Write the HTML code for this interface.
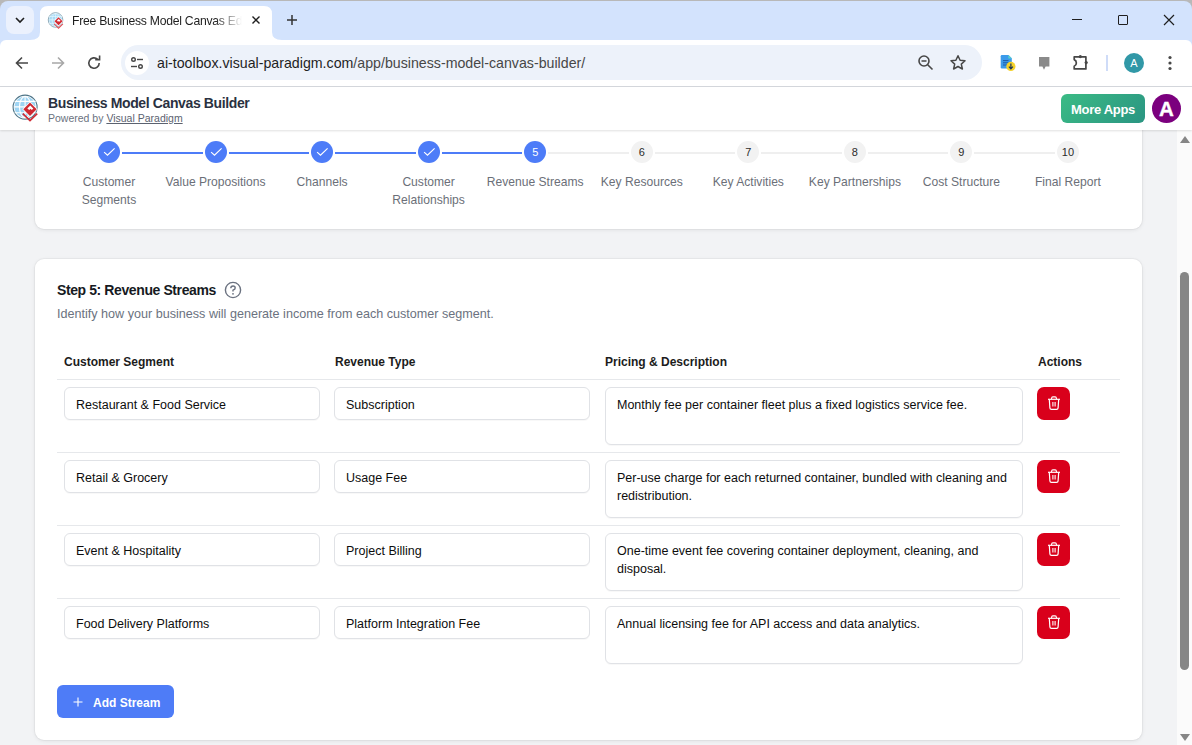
<!DOCTYPE html>
<html><head><meta charset="utf-8">
<style>
*{box-sizing:border-box;margin:0;padding:0}
html,body{width:1192px;height:745px;overflow:hidden;background:#f2f3f5;font-family:"Liberation Sans",sans-serif}
.a{position:absolute}
#frame{position:absolute;left:0;top:0;width:1192px;height:12px;background:#b8b8b8}
#tabbar{position:absolute;left:0;top:1px;width:1192px;height:46px;background:#d3e3fd;border-radius:8px 8px 0 0}
#toolbar{position:absolute;left:0;top:40px;width:1192px;height:47px;background:#fff;border-bottom:1px solid #d5d8dd;border-radius:6px 6px 0 0;z-index:2}
#apphdr{position:absolute;left:0;top:87px;width:1192px;height:43px;background:#fff;box-shadow:0 1px 2px rgba(0,0,0,.12);z-index:5}
#content{position:absolute;left:0;top:130px;width:1177px;height:615px;overflow:hidden}
#scroll{position:absolute;left:1177px;top:130px;width:15px;height:615px;background:#fbfbfb}
.card{position:absolute;background:#fff;border-radius:9px;box-shadow:0 0 0 1px rgba(0,0,0,.03),0 1px 4px rgba(0,0,0,.08)}
.step{position:absolute;width:22px;height:22px;border-radius:50%;top:11px;text-align:center;line-height:22px;font-size:11px}
.done{background:#4d7cf8}
.cur{background:#4d7cf8;color:#fff}
.todo{background:#f2f2f2;color:#2b2b2b}
.sline{position:absolute;height:2px;top:22px}
.lbl{position:absolute;top:43px;width:110px;margin-left:-55px;text-align:center;font-size:12.1px;line-height:18px;color:#6b6f78}
.th{position:absolute;top:95.8px;font-size:12px;font-weight:700;color:#1c1c1c}
.hr{position:absolute;left:22px;width:1063px;height:1px;background:#e6e8eb}
.inp{position:absolute;height:33px;border:1px solid #e0e2e6;box-shadow:0 1px 1px rgba(0,0,0,.03);border-radius:6px;background:#fff;font-size:12.5px;color:#0d0d0d;padding-left:11px;line-height:34px}
.ta{position:absolute;left:570px;width:418px;height:58px;border:1px solid #e0e2e6;box-shadow:0 1px 1px rgba(0,0,0,.03);border-radius:6px;background:#fff;font-size:12.5px;color:#0d0d0d;padding:8px 11px;line-height:18px}
.del{position:absolute;left:1002px;width:33px;height:33px;border-radius:7px;background:#d9001b}
.del svg{position:absolute;left:9.5px;top:8.7px}
</style></head>
<body>
<!-- ============ TAB BAR ============ -->
<div id="frame"></div>
<div id="tabbar">
  <!-- dropdown btn -->
  <div class="a" style="left:6px;top:5px;width:28px;height:28px;border-radius:8px;background:#ebf1fd"></div>
  <svg class="a" style="left:14px;top:14px" width="12" height="10" viewBox="0 0 12 10"><path d="M2 3 L6 7 L10 3" fill="none" stroke="#1f1f1f" stroke-width="1.6"/></svg>
  <!-- active tab -->
  <svg class="a" style="left:30px;top:5px" width="252" height="34" viewBox="0 0 252 34">
    <path d="M0 34 Q10 34 10 26 L10 8 Q10 0 18 0 L234 0 Q242 0 242 8 L242 26 Q242 34 252 34 Z" fill="#fff"/>
  </svg>
  <!-- favicon -->
  <svg class="a" style="left:47px;top:11px" width="17" height="17" viewBox="0 0 28 28">
    <circle cx="14.1" cy="13.1" r="12" fill="#fff" stroke="#6d93a6" stroke-width="1.3"/>
    <circle cx="14.1" cy="13.1" r="10.6" fill="#a9dbf6"/>
    <path d="M3.5 7.4 H24.7 M3.2 12.9 H25 M3.5 18.7 H24.7 M14.1 2.5 V23.7" stroke="#e9f7fd" stroke-width="1.1"/>
    <ellipse cx="14.1" cy="13.1" rx="5.6" ry="10.6" fill="none" stroke="#e9f7fd" stroke-width="1.1"/>
    <path d="M19 7.6 L26.7 15.3 L19 23 L11.3 15.3 Z" fill="#fff"/>
    <path d="M19 8.6 L25.7 15.3 L19 22 L12.3 15.3 Z" fill="#d42a33"/>
    <path d="M19.3 11.4 L22.3 14.4 L20.8 15.9 L19.6 14.7 L18.3 16 L16.3 14.4 Z" fill="#fff"/>
    <path d="M11.8 19.6 L19 26.6 L26.2 19.6" fill="none" stroke="#e0535a" stroke-width="1.8"/>
  </svg>
  <div class="a" style="left:72px;top:12.5px;font-size:12.2px;color:#1f1f1f;white-space:nowrap;width:170px;overflow:hidden;letter-spacing:-0.25px;-webkit-mask-image:linear-gradient(90deg,#000 84%,transparent 100%)">Free Business Model Canvas Editor</div>
  <svg class="a" style="left:251px;top:14px" width="10" height="10" viewBox="0 0 10 10"><path d="M1.5 1.5 L8.5 8.5 M8.5 1.5 L1.5 8.5" stroke="#1f1f1f" stroke-width="1.4"/></svg>
  <svg class="a" style="left:286px;top:13px" width="12" height="12" viewBox="0 0 12 12"><path d="M6 1 V11 M1 6 H11" stroke="#333" stroke-width="1.5"/></svg>
  <!-- window controls -->
  <div class="a" style="left:1072px;top:18px;width:10px;height:1px;background:#1f1f1f"></div>
  <div class="a" style="left:1118px;top:14px;width:10px;height:10px;border:1.2px solid #1f1f1f;border-radius:1px"></div>
  <svg class="a" style="left:1163px;top:13px" width="12" height="12" viewBox="0 0 12 12"><path d="M1 1 L11 11 M11 1 L1 11" stroke="#1f1f1f" stroke-width="1.2"/></svg>
</div>

<!-- ============ TOOLBAR ============ -->
<div id="toolbar">
  <svg class="a" style="left:14px;top:15px" width="16" height="16" viewBox="0 0 16 16"><path d="M14 8 H2.5 M8 2.5 L2.5 8 L8 13.5" fill="none" stroke="#474747" stroke-width="1.6"/></svg>
  <svg class="a" style="left:50px;top:15px" width="16" height="16" viewBox="0 0 16 16"><path d="M2 8 H13.5 M8 2.5 L13.5 8 L8 13.5" fill="none" stroke="#a8a8a8" stroke-width="1.6"/></svg>
  <svg class="a" style="left:86px;top:15px" width="16" height="16" viewBox="0 0 16 16"><path d="M13.2 8 A5.2 5.2 0 1 1 11.6 4.3" fill="none" stroke="#474747" stroke-width="1.6"/><path d="M9.2 4.6 L13.6 4.6 L13.6 0.6" fill="none" stroke="#474747" stroke-width="1.6"/></svg>
  <!-- omnibox -->
  <div class="a" style="left:121px;top:5px;width:861px;height:35px;border-radius:18px;background:#edf2fa"></div>
  <div class="a" style="left:125px;top:10.5px;width:24px;height:24px;border-radius:50%;background:#fff"></div>
  <svg class="a" style="left:129px;top:15px" width="16" height="16" viewBox="0 0 16 16">
    <circle cx="4.5" cy="4.5" r="1.8" fill="none" stroke="#474747" stroke-width="1.4"/><path d="M8 4.5 H14" stroke="#474747" stroke-width="1.4"/>
    <circle cx="11.5" cy="11.5" r="1.8" fill="none" stroke="#474747" stroke-width="1.4"/><path d="M2 11.5 H8" stroke="#474747" stroke-width="1.4"/>
  </svg>
  <div class="a" style="left:157px;top:15px;font-size:14.2px;color:#1f1f1f;white-space:nowrap;line-height:16px">ai-toolbox.visual-paradigm.com<span style="color:#474747">/app/business-model-canvas-builder/</span></div>
  <svg class="a" style="left:917px;top:14px" width="18" height="18" viewBox="0 0 18 18"><circle cx="7" cy="7" r="5" fill="none" stroke="#474747" stroke-width="1.6"/><path d="M4.5 7 H9.5 M10.7 10.7 L15.5 15.5" stroke="#474747" stroke-width="1.6"/></svg>
  <svg class="a" style="left:949px;top:14px" width="18" height="18" viewBox="0 0 18 18"><path d="M9 1.8 L11.1 6.3 L16 6.8 L12.3 10.1 L13.4 15 L9 12.5 L4.6 15 L5.7 10.1 L2 6.8 L6.9 6.3 Z" fill="none" stroke="#474747" stroke-width="1.5" stroke-linejoin="round"/></svg>
  <!-- extensions -->
  <svg class="a" style="left:999px;top:14px" width="20" height="20" viewBox="0 0 20 20">
    <path d="M2.9 1 H9.6 L12.8 4.2 V13.3 Q12.8 14.5 11.6 14.5 H2.9 Q1.7 14.5 1.7 13.3 V2.2 Q1.7 1 2.9 1 Z" fill="#3b9aea"/><path d="M9.4 1 L12.8 4.4 H9.4 Z" fill="#57d6c9"/>
    <path d="M4 6.6 H9.5 M4 8.8 H9.5 M4 11 H8" stroke="#1c5aa6" stroke-width="1"/>
    <circle cx="11.9" cy="12.4" r="4.6" fill="#f5d22b"/><path d="M11.9 9.6 V14.6 M9.9 12.6 L11.9 14.8 L13.9 12.6" fill="none" stroke="#1d3557" stroke-width="1.2"/>
  </svg>
  <svg class="a" style="left:1036px;top:14px" width="18" height="18" viewBox="0 0 18 18"><path d="M3 3.1 H13.4 V12.4 H9.6 L8 15.7 L6.4 12.4 H3 Z" fill="#8a8a8a"/></svg>
  <svg class="a" style="left:1071px;top:14px" width="19" height="18" viewBox="0 0 19 18"><path d="M3.2 2.8 H14.9 V14.9 H3.2 V12.2 A3.6 3.6 0 0 0 3.2 5.6 Z" fill="none" stroke="#474747" stroke-width="1.7" stroke-linejoin="round"/><circle cx="9.3" cy="2.6" r="1.6" fill="#474747"/><circle cx="15.2" cy="8.6" r="1.6" fill="#474747"/></svg>
  <div class="a" style="left:1106px;top:15px;width:2px;height:16px;background:#cfdcf8"></div>
  <div class="a" style="left:1124px;top:13px;width:20px;height:20px;border-radius:50%;background:#3198a7;color:#fff;font-size:11px;text-align:center;line-height:20px">A</div>
  <svg class="a" style="left:1166px;top:14px" width="8" height="18" viewBox="0 0 8 18"><circle cx="4" cy="3.5" r="1.6" fill="#474747"/><circle cx="4" cy="9" r="1.6" fill="#474747"/><circle cx="4" cy="14.5" r="1.6" fill="#474747"/></svg>
</div>

<!-- ============ APP HEADER ============ -->
<div id="apphdr">
  <svg class="a" style="left:11px;top:7px" width="28" height="28" viewBox="0 0 28 28">
    <circle cx="14.1" cy="13.1" r="12" fill="#fff" stroke="#4d7487" stroke-width="1.1"/>
    <circle cx="14.1" cy="13.1" r="10.6" fill="#9ed4f3"/>
    <path d="M3.5 7.4 H24.7 M3.2 12.9 H25 M3.5 18.7 H24.7 M14.1 2.5 V23.7" stroke="#fff" stroke-width="1.1"/>
    <ellipse cx="14.1" cy="13.1" rx="5.6" ry="10.6" fill="none" stroke="#fff" stroke-width="1.1"/>
    <path d="M19 7.6 L26.7 15.3 L19 23 L11.3 15.3 Z" fill="#fff"/>
    <path d="M19 8.6 L25.7 15.3 L19 22 L12.3 15.3 Z" fill="#cf2a33"/>
    <path d="M19.3 11.4 L22.3 14.4 L20.8 15.9 L19.6 14.7 L18.3 16 L16.3 14.4 Z" fill="#fff"/>
    <path d="M11.8 19.6 L19 26.6 L26.2 19.6" fill="none" stroke="#cf2a33" stroke-width="1.7"/>
  </svg>
  <div class="a" style="left:48px;top:8px;font-size:14px;font-weight:700;color:#2a3141;white-space:nowrap;letter-spacing:-0.38px;line-height:16px">Business Model Canvas Builder</div>
  <div class="a" style="left:48px;top:24px;font-size:10.5px;color:#6b7280;white-space:nowrap;line-height:14px">Powered by <span style="color:#5b6270;text-decoration:underline">Visual Paradigm</span></div>
  <div class="a" style="left:1061px;top:7px;width:84px;height:29px;border-radius:6px;background:linear-gradient(135deg,#3bbb85,#2a9582);color:#fff;font-size:13px;font-weight:700;text-align:center;line-height:31.6px;letter-spacing:-0.3px">More Apps</div>
  <div class="a" style="left:1152px;top:7px;width:29px;height:29px;border-radius:50%;background:#7b007e;color:#fff;font-size:20.5px;font-weight:700;-webkit-text-stroke:0.4px #fff;text-align:center;line-height:29px">A</div>
</div>

<!-- ============ CONTENT ============ -->
<div id="content">
  <!-- stepper card -->
  <div class="card" style="left:35px;top:-60px;width:1107px;height:159px">
    <div id="stepper" class="a" style="left:-35px;top:60px;width:1177px;height:100px">
<div class="sline" style="left:122.0px;width:80.6px;background:#4d7cf8"></div>
<div class="sline" style="left:228.6px;width:80.6px;background:#4d7cf8"></div>
<div class="sline" style="left:335.1px;width:80.5px;background:#4d7cf8"></div>
<div class="sline" style="left:441.6px;width:80.6px;background:#4d7cf8"></div>
<div class="sline" style="left:548.2px;width:80.5px;background:#efefef"></div>
<div class="sline" style="left:654.8px;width:80.5px;background:#efefef"></div>
<div class="sline" style="left:761.3px;width:80.6px;background:#efefef"></div>
<div class="sline" style="left:867.9px;width:80.5px;background:#efefef"></div>
<div class="sline" style="left:974.4px;width:80.5px;background:#efefef"></div>
<div class="step done" style="left:98.0px"><svg width="22" height="22" viewBox="0 0 22 22" style="display:block"><path d="M6.1 11.1 L9.5 14.2 L16.6 7.3" fill="none" stroke="#fff" stroke-width="1.15"/></svg></div>
<div class="lbl" style="left:109.0px">Customer<br>Segments</div>
<div class="step done" style="left:204.6px"><svg width="22" height="22" viewBox="0 0 22 22" style="display:block"><path d="M6.1 11.1 L9.5 14.2 L16.6 7.3" fill="none" stroke="#fff" stroke-width="1.15"/></svg></div>
<div class="lbl" style="left:215.6px">Value Propositions</div>
<div class="step done" style="left:311.1px"><svg width="22" height="22" viewBox="0 0 22 22" style="display:block"><path d="M6.1 11.1 L9.5 14.2 L16.6 7.3" fill="none" stroke="#fff" stroke-width="1.15"/></svg></div>
<div class="lbl" style="left:322.1px">Channels</div>
<div class="step done" style="left:417.6px"><svg width="22" height="22" viewBox="0 0 22 22" style="display:block"><path d="M6.1 11.1 L9.5 14.2 L16.6 7.3" fill="none" stroke="#fff" stroke-width="1.15"/></svg></div>
<div class="lbl" style="left:428.6px">Customer<br>Relationships</div>
<div class="step cur" style="left:524.2px">5</div>
<div class="lbl" style="left:535.2px">Revenue Streams</div>
<div class="step todo" style="left:630.8px">6</div>
<div class="lbl" style="left:641.8px">Key Resources</div>
<div class="step todo" style="left:737.3px">7</div>
<div class="lbl" style="left:748.3px">Key Activities</div>
<div class="step todo" style="left:843.9px">8</div>
<div class="lbl" style="left:854.9px">Key Partnerships</div>
<div class="step todo" style="left:950.4px">9</div>
<div class="lbl" style="left:961.4px">Cost Structure</div>
<div class="step todo" style="left:1056.9px">10</div>
<div class="lbl" style="left:1067.9px">Final Report</div>
</div><!--/stepper-->
  </div>

  <!-- main card -->
  <div class="card" style="left:35px;top:129px;width:1107px;height:481px">
    <div class="a" style="left:22px;top:23.3px;font-size:14px;font-weight:700;color:#161a22;white-space:nowrap;letter-spacing:-0.4px;line-height:16px">Step 5: Revenue Streams</div>
    <svg class="a" style="left:189px;top:22px" width="18" height="18" viewBox="0 0 18 18"><circle cx="9" cy="9" r="7.6" fill="none" stroke="#6b7280" stroke-width="1.4"/><path d="M6.8 7.2 Q6.8 5 9 5 Q11.2 5 11.2 7 Q11.2 8.4 9 9.2 V10.4" fill="none" stroke="#6b7280" stroke-width="1.4"/><circle cx="9" cy="12.8" r=".9" fill="#6b7280"/></svg>
    <div class="a" style="left:22px;top:47px;font-size:12.6px;color:#6b7280;white-space:nowrap;line-height:16px">Identify how your business will generate income from each customer segment.</div>

    <div class="th" style="left:29px">Customer Segment</div>
    <div class="th" style="left:300px">Revenue Type</div>
    <div class="th" style="left:570px">Pricing &amp; Description</div>
    <div class="th" style="left:1003px">Actions</div>
    <div class="hr" style="top:120px"></div>

    <div id="rows">
<div class="inp" style="left:29px;top:128px;width:256px">Restaurant &amp; Food Service</div>
<div class="inp" style="left:299px;top:128px;width:256px">Subscription</div>
<div class="ta" style="top:128px">Monthly fee per container fleet plus a fixed logistics service fee.</div>
<div class="del" style="top:128px"><svg width="14" height="15" viewBox="0 0 14 15"><path d="M1 3.3 H13" stroke="#fff" stroke-width="1.2"/><path d="M4.6 3.2 V2.2 Q4.6 0.9 5.9 0.9 H8.1 Q9.4 0.9 9.4 2.2 V3.2" fill="none" stroke="#fff" stroke-width="1.1"/><path d="M2.3 3.5 L2.9 11.9 Q3 13.3 4.4 13.3 H9.6 Q11 13.3 11.1 11.9 L11.7 3.5" fill="none" stroke="#fff" stroke-width="1.2"/><path d="M5.9 6 V10.6 M8.1 6 V10.6" stroke="#fff" stroke-width="1.1"/></svg></div>
<div class="hr" style="top:193px"></div>
<div class="inp" style="left:29px;top:201px;width:256px">Retail &amp; Grocery</div>
<div class="inp" style="left:299px;top:201px;width:256px">Usage Fee</div>
<div class="ta" style="top:201px">Per-use charge for each returned container, bundled with cleaning and redistribution.</div>
<div class="del" style="top:201px"><svg width="14" height="15" viewBox="0 0 14 15"><path d="M1 3.3 H13" stroke="#fff" stroke-width="1.2"/><path d="M4.6 3.2 V2.2 Q4.6 0.9 5.9 0.9 H8.1 Q9.4 0.9 9.4 2.2 V3.2" fill="none" stroke="#fff" stroke-width="1.1"/><path d="M2.3 3.5 L2.9 11.9 Q3 13.3 4.4 13.3 H9.6 Q11 13.3 11.1 11.9 L11.7 3.5" fill="none" stroke="#fff" stroke-width="1.2"/><path d="M5.9 6 V10.6 M8.1 6 V10.6" stroke="#fff" stroke-width="1.1"/></svg></div>
<div class="hr" style="top:266px"></div>
<div class="inp" style="left:29px;top:274px;width:256px">Event &amp; Hospitality</div>
<div class="inp" style="left:299px;top:274px;width:256px">Project Billing</div>
<div class="ta" style="top:274px">One-time event fee covering container deployment, cleaning, and disposal.</div>
<div class="del" style="top:274px"><svg width="14" height="15" viewBox="0 0 14 15"><path d="M1 3.3 H13" stroke="#fff" stroke-width="1.2"/><path d="M4.6 3.2 V2.2 Q4.6 0.9 5.9 0.9 H8.1 Q9.4 0.9 9.4 2.2 V3.2" fill="none" stroke="#fff" stroke-width="1.1"/><path d="M2.3 3.5 L2.9 11.9 Q3 13.3 4.4 13.3 H9.6 Q11 13.3 11.1 11.9 L11.7 3.5" fill="none" stroke="#fff" stroke-width="1.2"/><path d="M5.9 6 V10.6 M8.1 6 V10.6" stroke="#fff" stroke-width="1.1"/></svg></div>
<div class="hr" style="top:339px"></div>
<div class="inp" style="left:29px;top:347px;width:256px">Food Delivery Platforms</div>
<div class="inp" style="left:299px;top:347px;width:256px">Platform Integration Fee</div>
<div class="ta" style="top:347px">Annual licensing fee for API access and data analytics.</div>
<div class="del" style="top:347px"><svg width="14" height="15" viewBox="0 0 14 15"><path d="M1 3.3 H13" stroke="#fff" stroke-width="1.2"/><path d="M4.6 3.2 V2.2 Q4.6 0.9 5.9 0.9 H8.1 Q9.4 0.9 9.4 2.2 V3.2" fill="none" stroke="#fff" stroke-width="1.1"/><path d="M2.3 3.5 L2.9 11.9 Q3 13.3 4.4 13.3 H9.6 Q11 13.3 11.1 11.9 L11.7 3.5" fill="none" stroke="#fff" stroke-width="1.2"/><path d="M5.9 6 V10.6 M8.1 6 V10.6" stroke="#fff" stroke-width="1.1"/></svg></div>
</div><!--/rows-->

    <div class="a" style="left:22px;top:426px;width:117px;height:33px;border-radius:6px;background:#4e7cf7"></div>
    <svg class="a" style="left:37px;top:436.5px" width="12" height="12" viewBox="0 0 12 12"><path d="M6 1.5 V10.5 M1.5 6 H10.5" stroke="#fff" stroke-width="1.1"/></svg>
    <div class="a" style="left:58px;top:435.5px;font-size:12px;font-weight:700;color:#fff;white-space:nowrap;line-height:16px">Add Stream</div>
  </div>
</div>

<!-- scrollbar -->
<div id="scroll">
  <svg class="a" style="left:2.5px;top:6px" width="10" height="7" viewBox="0 0 10 7"><path d="M5 0 L10 7 H0 Z" fill="#868686"/></svg>
  <div class="a" style="left:3px;top:142px;width:9px;height:398px;border-radius:5px;background:#868686"></div>
  <svg class="a" style="left:2.5px;top:604px" width="10" height="7" viewBox="0 0 10 7"><path d="M0 0 H10 L5 7 Z" fill="#868686"/></svg>
</div>
</body></html>
